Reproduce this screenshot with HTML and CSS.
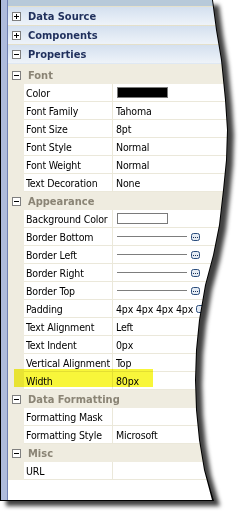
FILE: index.html
```html
<!DOCTYPE html>
<html lang="en">
<head>
  <meta charset="UTF-8" />
  <title>Properties</title>
  <link rel="stylesheet" href="styles.css">
</head>
<body>
  <div class="frame">
    <div class="sheet">
      <div class="panel">
        <div class="rail"></div>
        <div class="content">
          <div class="top-strip"></div>

          <div class="bar"><span class="box plus"></span>Data Source</div>
          <div class="bar"><span class="box plus"></span>Components</div>
          <div class="bar last"><span class="box minus"></span>Properties</div>

          <div class="props">
            <!-- Font -->
            <div class="group"><span class="box minus"></span>Font</div>
            <div class="row"><div class="name">Color</div><div class="val"><span class="swatch dark"></span></div></div>
            <div class="row"><div class="name">Font Family</div><div class="val">Tahoma</div></div>
            <div class="row"><div class="name">Font Size</div><div class="val">8pt</div></div>
            <div class="row"><div class="name">Font Style</div><div class="val">Normal</div></div>
            <div class="row"><div class="name">Font Weight</div><div class="val">Normal</div></div>
            <div class="row"><div class="name">Text Decoration</div><div class="val">None</div></div>

            <!-- Appearance -->
            <div class="group"><span class="box minus"></span>Appearance</div>
            <div class="row"><div class="name">Background Color</div><div class="val"><span class="swatch light"></span></div></div>
            <div class="row"><div class="name">Border Bottom</div><div class="val"><span class="rule"></span><svg class="more" width="9" height="8" viewBox="0 0 9 8"><rect x="0.5" y="0.5" width="8" height="7" rx="2" fill="#e4ebf3" stroke="#2b4d7c"/><rect x="2" y="4" width="1" height="1" fill="#1b2f55"/><rect x="4" y="4" width="1" height="1" fill="#1b2f55"/><rect x="6" y="4" width="1" height="1" fill="#1b2f55"/></svg></div></div>
            <div class="row"><div class="name">Border Left</div><div class="val"><span class="rule"></span><svg class="more" width="9" height="8" viewBox="0 0 9 8"><rect x="0.5" y="0.5" width="8" height="7" rx="2" fill="#e4ebf3" stroke="#2b4d7c"/><rect x="2" y="4" width="1" height="1" fill="#1b2f55"/><rect x="4" y="4" width="1" height="1" fill="#1b2f55"/><rect x="6" y="4" width="1" height="1" fill="#1b2f55"/></svg></div></div>
            <div class="row"><div class="name">Border Right</div><div class="val"><span class="rule"></span><svg class="more" width="9" height="8" viewBox="0 0 9 8"><rect x="0.5" y="0.5" width="8" height="7" rx="2" fill="#e4ebf3" stroke="#2b4d7c"/><rect x="2" y="4" width="1" height="1" fill="#1b2f55"/><rect x="4" y="4" width="1" height="1" fill="#1b2f55"/><rect x="6" y="4" width="1" height="1" fill="#1b2f55"/></svg></div></div>
            <div class="row"><div class="name">Border Top</div><div class="val"><span class="rule"></span><svg class="more" width="9" height="8" viewBox="0 0 9 8"><rect x="0.5" y="0.5" width="8" height="7" rx="2" fill="#e4ebf3" stroke="#2b4d7c"/><rect x="2" y="4" width="1" height="1" fill="#1b2f55"/><rect x="4" y="4" width="1" height="1" fill="#1b2f55"/><rect x="6" y="4" width="1" height="1" fill="#1b2f55"/></svg></div></div>
            <div class="row"><div class="name">Padding</div><div class="val">4px 4px 4px 4px<svg class="more pad" width="9" height="8" viewBox="0 0 9 8"><rect x="0.5" y="0.5" width="8" height="7" rx="2" fill="#e4ebf3" stroke="#2b4d7c"/></svg></div></div>
            <div class="row"><div class="name">Text Alignment</div><div class="val">Left</div></div>
            <div class="row"><div class="name">Text Indent</div><div class="val">0px</div></div>
            <div class="row"><div class="name">Vertical Alignment</div><div class="val">Top</div></div>
            <div class="row marked"><span class="marker"></span><div class="name">Width</div><div class="val">80px</div></div>

            <!-- Data Formatting -->
            <div class="group"><span class="box minus"></span>Data Formatting</div>
            <div class="row"><div class="name">Formatting Mask</div><div class="val"></div></div>
            <div class="row"><div class="name">Formatting Style</div><div class="val">Microsoft</div></div>

            <!-- Misc -->
            <div class="group"><span class="box minus"></span>Misc</div>
            <div class="row"><div class="name">URL</div><div class="val"></div></div>
          </div>

          <div class="tail"></div>
        </div>
      </div>
    </div>
  </div>
</body>
</html>
```

FILE: styles.css
```css
* {
  box-sizing: border-box;
  margin: 0;
  padding: 0;
}

body {
  background: #fff;
  font-family: 'DejaVu Sans Condensed', 'DejaVu Sans', sans-serif;
  font-size: 10.5px;
  color: #000;
}

.frame {
  width: 247px;
  height: 518px;
  filter: drop-shadow(6px 5px 2px rgba(0, 0, 0, 0.75));
}

/* black outline; the torn right edge is cut with clip-path */
.sheet {
  width: 240px;
  height: 501px;
  background: #000;
  padding: 0 0 1px 1px;
  clip-path: polygon(0 0, 213px 0, 217px 30px, 222px 60px, 226px 100px, 228px 130px, 227px 160px, 224px 190px, 220px 225px, 214px 255px, 206px 285px, 200px 320px, 197px 350px, 196px 380px, 197px 410px, 200px 440px, 205px 470px, 214px 501px, 0 501px);
}

.panel {
  width: 239px;
  height: 500px;
  display: flex;
  background: #fff;
  overflow: hidden;
  clip-path: polygon(0 0, 211px 0, 215px 30px, 220px 60px, 224px 100px, 226px 130px, 225px 160px, 222px 190px, 218px 225px, 212px 255px, 204px 285px, 198px 320px, 195px 350px, 194px 380px, 195px 410px, 198px 440px, 203px 470px, 211px 500px, 0 500px);
}

.rail {
  width: 7px;
  flex: none;
  background: #aebbdc;
  border-right: 1px solid #7080b2;
}

.content {
  flex: 1;
  display: flex;
  flex-direction: column;
}

.top-strip {
  height: 6px;
  background: #b7c9d9;
}

.bar {
  height: 19px;
  display: flex;
  align-items: center;
  border-top: 1px solid #e4e0cb;
  background: linear-gradient(#d4e0ef, #eef3f9);
  color: #1f2f5c;
  font-size: 11px;
  font-weight: bold;
}

.bar.last {
  height: 20px;
  border-bottom: 1px solid #dfe8f3;
}

.box {
  width: 9px;
  height: 9px;
  flex: none;
  margin: 0 7px 0 4px;
  border: 1px solid #7f7f7f;
  background: #fff;
  position: relative;
}

.box::before,
.box.plus::after {
  content: "";
  position: absolute;
  background: #000;
}

.box::before {
  left: 1px;
  top: 3px;
  width: 5px;
  height: 1px;
}

.box.plus::after {
  left: 3px;
  top: 1px;
  width: 1px;
  height: 5px;
}

.props {
  background: #efece0;
  padding-top: 2px;
}

.group {
  height: 18px;
  display: flex;
  align-items: center;
  color: #8a8475;
  font-size: 11px;
  font-weight: bold;
}

.row {
  height: 18px;
  display: grid;
  grid-template-columns: 16px 89px 1fr;
  position: relative;
}

.name,
.val {
  background: #fff;
  border-bottom: 1px solid #ebe8da;
  display: flex;
  align-items: center;
  white-space: nowrap;
  letter-spacing: -0.15px;
}

.name {
  grid-column: 2;
  padding-left: 2px;
  border-right: 1px solid #ebe8da;
}

.val {
  padding-left: 3px;
}

.swatch {
  width: 51px;
  height: 11px;
  margin-left: 1px;
  border: 1px solid #7a7a7a;
}

.swatch.dark {
  background: #000;
}

.swatch.light {
  background: #fff;
}

.rule {
  width: 70px;
  height: 1px;
  margin-left: 1px;
  background: #7d7d7d;
}

.more {
  margin-left: 4px;
  flex: none;
}

.more.pad {
  margin-left: 3px;
}

/* yellow highlighter stroke over the Width row */
.marker {
  position: absolute;
  left: 6px;
  top: -3px;
  width: 139px;
  height: 18px;
  background: #f8f63a;
  mix-blend-mode: multiply;
  z-index: 1;
}

.tail {
  flex: 1;
  background: #fff;
}
```
